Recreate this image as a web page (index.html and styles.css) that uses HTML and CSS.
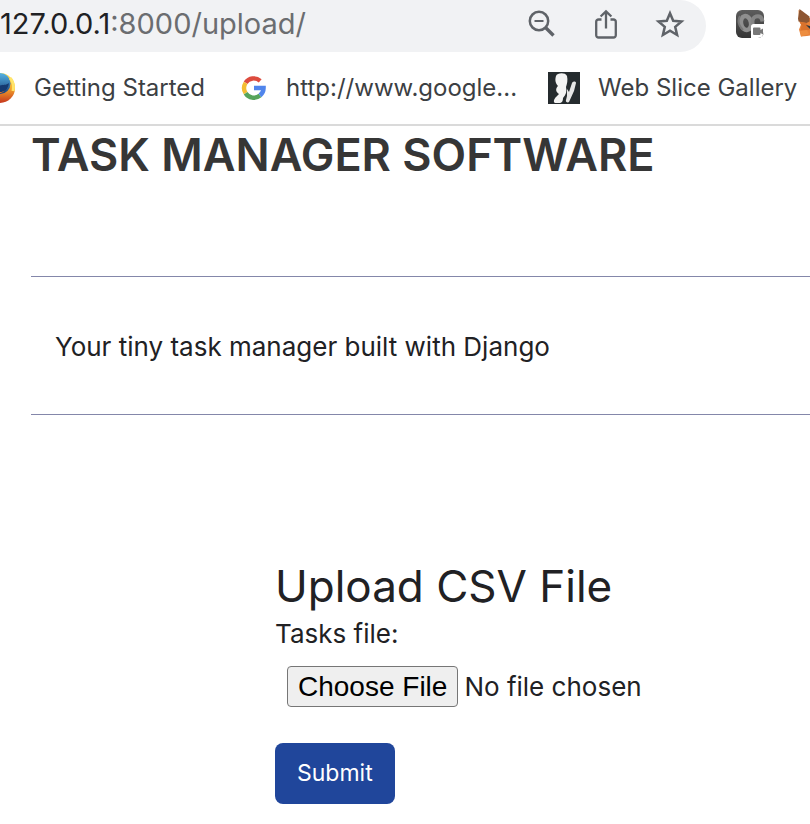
FILE: index.html
```html
<!DOCTYPE html>
<html lang="en">
<head>
<meta charset="utf-8">
<meta name="viewport" content="width=device-width, initial-scale=1">
<title>Task Manager Software</title>
<link rel="stylesheet" href="styles.css">
</head>
<body>
<header class="browser">
  <div class="toolbar">
    <div class="omnibox">
      <span class="url"><span class="host">127.0.0.1</span>:8000/upload/</span>
      <div class="actions">
        <button class="icon-button" type="button" aria-label="Zoom">
          <svg width="32" height="32" viewBox="0 0 32 32" fill="none" stroke="#5f6368">
            <circle cx="13" cy="13" r="9.2" stroke-width="2.5"/>
            <path d="M8.5 13h9" stroke-width="2"/>
            <path d="M19.5 19.5l8 8" stroke-width="3.4"/>
          </svg>
        </button>
        <button class="icon-button" type="button" aria-label="Share">
          <svg width="32" height="32" viewBox="0 0 32 32" fill="none" stroke="#5f6368" stroke-width="2.3">
            <path d="M11.5 11.500H8.500a2.300 2.300 0 0 0-2.300 2.300v13.400a2.300 2.300 0 0 0 2.300 2.300h15a2.300 2.300 0 0 0 2.300-2.300V13.800a2.300 2.300 0 0 0-2.300-2.300h-3"/>
            <path d="M16 20.500V4M10.600 8.500L16 3.300l5.400 5.200"/>
          </svg>
        </button>
        <button class="icon-button" type="button" aria-label="Bookmark this tab">
          <svg width="32" height="32" viewBox="0 0 32 32" fill="none" stroke="#5f6368" stroke-width="2.500">
            <path d="M16 5.200l3.200 7.600 8.300.700-6.300 5.400 1.900 8.100L16 22.700 8.900 27l1.900-8.100-6.300-5.400 8.300-.700z"/>
          </svg>
        </button>
      </div>
    </div>
    <div class="extensions">
      <svg class="ext" width="30" height="30" viewBox="0 0 30 30" aria-hidden="true">
        <defs>
          <linearGradient id="dark" x2="0" y2="1"><stop stop-color="#5d5d5d"/><stop offset="1" stop-color="#353535"/></linearGradient>
        </defs>
        <rect x="1" y="1" width="28" height="28" rx="6" fill="url(#dark)"/>
        <ellipse cx="11" cy="14" rx="5" ry="7" transform="rotate(-12 11 14)" fill="none" stroke="#8f8f8f" stroke-width="4.500"/>
        <path d="M5 7c-3 5-1 10 3 14" fill="none" stroke="#777" stroke-width="2"/>
        <path d="M18 18c-1-6-1-9 3-10.500 4-1 6 1 6.500 5" fill="none" stroke="#858585" stroke-width="4"/>
        <path d="M18.500 15H29v8a6 6 0 0 1-6 6h-7V17.500a2.500 2.500 0 0 1 2.500-2.500z" fill="#fff"/>
        <path d="M19 18.500h5.500q1 0 1 1v1.500l2.500-1.500v6l-2.500-1.500V25q0 1-1 1H19q-1 0-1-1v-5.500q0-1 1-1z" fill="#777"/>
      </svg>
      <svg class="ext" width="30" height="30" viewBox="0 0 30 30" aria-hidden="true">
        <path d="M1.500 1l11 8H26L29 1v22l-5 5-7-2-7 1-6 .500-2-7 2-5-2-4z" fill="#e8833a"/>
        <path d="M2.500 0l10 7.500v5l-3 1.500-8-1.500-.500-3z" fill="#8d5632"/>
        <path d="M2.500 13l7 1 3 7-9 .500 1-5z" fill="#d9722c"/>
        <path d="M9 16l4 1v3z" fill="#293541"/>
        <path d="M3 22l7-1 2 4-8 2.500z" fill="#ed8e40"/>
      </svg>
    </div>
  </div>
  <nav class="bookmarks" aria-label="Bookmarks">
    <a class="bookmark" href="#getting-started">
      <svg width="32" height="32" viewBox="0 0 32 32" aria-hidden="true">
        <defs>
          <linearGradient id="fox" x2="0" y2="1"><stop stop-color="#ffe25a"/><stop offset=".500" stop-color="#f4a72c"/><stop offset="1" stop-color="#c6361d"/></linearGradient>
          <linearGradient id="globe" x2="0" y2="1"><stop stop-color="#55b4e4"/><stop offset="1" stop-color="#173e78"/></linearGradient>
        </defs>
        <circle cx="16" cy="16" r="15" fill="url(#fox)"/>
        <ellipse cx="16" cy="11.500" rx="10.500" ry="10.500" fill="url(#globe)"/>
        <path d="M26 6c3 3 4 8 3 13" fill="none" stroke="#ffe56a" stroke-width="3"/>
        <path d="M6 12c3-1 7 0 9 3 3 2 6 0 8-2-1 7-7 10-14 8z" fill="#e8731f"/>
        <path d="M15 14c3-2 7 0 10-3-1 7-5 9-9 9z" fill="#153a70"/>
      </svg>
      <span>Getting Started</span>
    </a>
    <a class="bookmark" href="#google">
      <svg width="32" height="32" viewBox="-4 0 32 32" fill="none" stroke-width="4.400" aria-hidden="true">
        <path d="M20.200 8.800A9.800 9.800 0 0 0 5.600 10.800" stroke="#dd4b3e"/>
        <path d="M5.600 10.800a9.800 9.800 0 0 0 0 10.400" stroke="#f4bd32"/>
        <path d="M5.600 21.200a9.800 9.800 0 0 0 14.400 2.300" stroke="#56a45b"/>
        <path d="M20 23.500A9.800 9.800 0 0 0 23.600 16H14" stroke="#5085ec"/>
      </svg>
      <span>http://www.google...</span>
    </a>
    <a class="bookmark" href="#web-slice">
      <svg width="32" height="32" viewBox="0 0 32 32" aria-hidden="true">
        <path d="M0 0h32v32H0z" fill="#252b2e"/>
        <path d="M8 4c1-3 9-4 11 0 1 4 0 8-1 11 1 4 0 8-3 11 0 3-1 5-4 5H7c-2-1-1-4 1-6l3-3c-3-2-4-5-1-8-3-3-3-7-2-10z" fill="#f3f3f3"/>
        <path d="M19 17l2 3 3-9c1-2 4-2 4 0l-2 8-5 11c-1 1-4 0-3-2l1-4z" fill="#e6e6e6"/>
      </svg>
      <span>Web Slice Gallery</span>
    </a>
  </nav>
</header>
<main class="page">
  <h1>TASK MANAGER SOFTWARE</h1>
  <p class="tagline">Your tiny task manager built with Django</p>
  <form class="upload">
    <h2>Upload CSV File</h2>
    <label for="tasks-file">Tasks file:</label>
    <input id="tasks-file" class="file" type="file" accept=".csv">
    <button class="submit" type="submit">Submit</button>
  </form>
</main>
</body>
</html>
```
FILE: styles.css
```css
* {
  box-sizing: border-box;
}

body {
  margin: 0;
  background: #fff;
  color: #212124;
  font-family: Inter, "Liberation Sans", sans-serif;
  font-size: 26px;
  line-height: 40px;
  overflow-x: hidden;
}

h1,
h2,
p {
  margin: 0;
}

.browser {
  border-bottom: 2px solid #dadada;
  overflow: hidden;
}

.toolbar {
  display: flex;
  align-items: center;
  height: 52px;
}

.omnibox {
  display: flex;
  flex: 1;
  align-items: center;
  justify-content: space-between;
  height: 52px;
  padding-right: 20px;
  padding-bottom: 4px;
  border-radius: 0 26px 26px 0;
  background: #f1f2f4;
}

.url {
  color: #6b6d70;
  font-size: 29px;
}

.host {
  color: #202124;
}

.actions {
  display: flex;
  gap: 32px;
}

.icon-button {
  display: flex;
  padding: 0;
  border: 0;
  background: none;
}

.extensions {
  display: flex;
  gap: 32px;
  margin-right: -17px;
  padding-bottom: 4px;
  padding-left: 29px;
}

.ext {
  flex: none;
}

.bookmarks {
  display: flex;
  gap: 31px;
  height: 72px;
  margin-left: -16px;
  align-items: center;
}

.bookmark {
  display: flex;
  flex: none;
  gap: 18px;
  align-items: center;
  color: #3c4043;
  font-size: 24px;
  text-decoration: none;
}

.page {
  padding-left: 31px;
}

h1 {
  color: #363636;
  font-size: 45px;
  font-weight: 600;
  line-height: 58px;
  white-space: nowrap;
}

.tagline {
  margin-top: 92px;
  padding: 50px 24px 47px;
  border: solid #8487aa;
  border-width: 1px 0;
}

.upload {
  display: flex;
  flex-direction: column;
  align-items: flex-start;
  margin-top: 143px;
  padding-left: 244px;
}

h2 {
  font-size: 44px;
  font-weight: 400;
  line-height: 56px;
}

.file {
  margin: 12px 12px 36px;
  font: inherit;
}

.file::file-selector-button {
  height: 41px;
  margin-right: 6px;
  padding: 0 10px;
  border: 1px solid #767676;
  border-radius: 4px;
  background: #efefef;
  color: #000;
  font-family: "Liberation Sans", Arial, sans-serif;
  font-size: 28px;
}

.submit {
  padding: 10px 22px;
  border: 0;
  border-radius: 8px;
  background: #20469b;
  color: #fff;
  font: inherit;
  font-size: 23px;
  line-height: 41px;
}
```
